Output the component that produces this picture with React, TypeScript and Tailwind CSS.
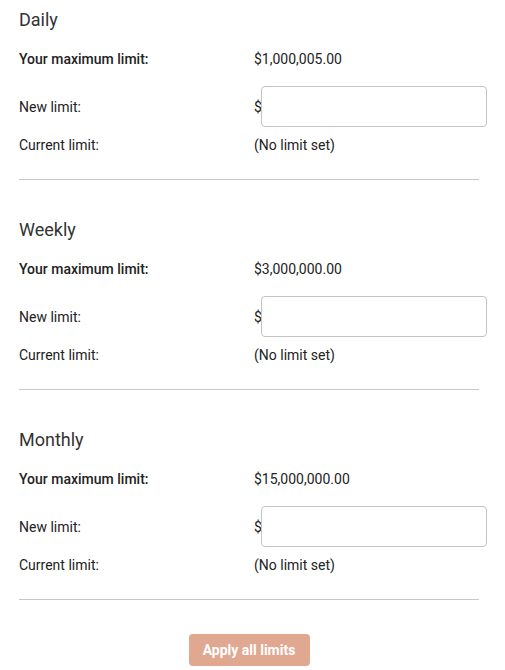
const sections = [
  { title: "Daily", max: "$1,000,005.00" },
  { title: "Weekly", max: "$3,000,000.00" },
  { title: "Monthly", max: "$15,000,000.00" },
];

function LimitSection({ title, max }: { title: string; max: string }) {
  return (
    <section className="pt-2">
      <h2 className="text-[18px] leading-6 font-normal text-[#333]">{title}</h2>
      <div className="mt-[17px] grid grid-cols-[235px_1fr] items-center text-[14px] leading-5 text-[#222]">
        <div className="font-medium">Your maximum limit:</div>
        <div>{max}</div>
      </div>
      <div className="mt-[17px] grid grid-cols-[235px_1fr] items-center text-[14px] leading-5 text-[#222]">
        <div>New limit:</div>
        <div className="flex items-center">
          <span className="w-[7px]">$</span>
          <input
            type="text"
            className="h-[41px] w-[226px] rounded border border-[#c4c4c4] bg-white px-2 outline-none"
          />
        </div>
      </div>
      <div className="mt-2 grid grid-cols-[235px_1fr] items-center text-[14px] leading-5 text-[#222]">
        <div>Current limit:</div>
        <div>(No limit set)</div>
      </div>
      <hr className="mt-6 mb-[30px] w-[460px] border-t border-[#c8c8c8]" />
    </section>
  );
}

export default function App() {
  return (
    <div className="min-h-[670px] bg-white pl-[19px] font-['Roboto',sans-serif]">
      {sections.map((s) => (
        <LimitSection key={s.title} title={s.title} max={s.max} />
      ))}
      <div className="flex w-[460px] justify-center pt-1">
        <button className="h-8 w-[121px] rounded bg-[#e0a890] text-[14px] font-bold text-white">
          Apply all limits
        </button>
      </div>
    </div>
  );
}
